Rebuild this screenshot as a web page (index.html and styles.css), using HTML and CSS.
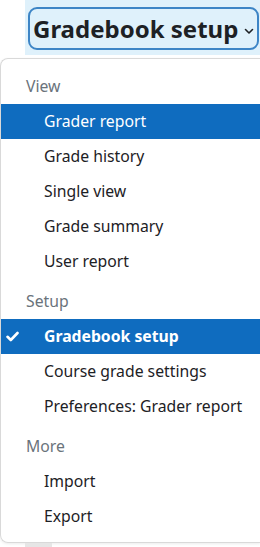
FILE: index.html
```html
<!DOCTYPE html>
<html lang="en">
<head>
    <meta charset="UTF-8">
    <meta name="viewport" content="width=device-width, initial-scale=1.0">
    <title>Gradebook setup</title>
    <link rel="stylesheet" href="styles.css">
</head>
<body>

    <!-- Selector -->
    <div class="select-wrap">
        <button class="select">
            <span>Gradebook setup</span>
            <svg class="chevron" width="10" height="7" viewBox="0 0 10 7"><path d="M1.5 1.5 L5 5 L8.5 1.5" fill="none" stroke="#1d2125" stroke-width="1.6" stroke-linecap="round" stroke-linejoin="round"/></svg>
        </button>
    </div>

    <!-- Dropdown menu -->
    <div class="menu">
        <div class="group">
            <div class="group-title">View</div>
            <a href="#" class="item active">Grader report</a>
            <a href="#" class="item">Grade history</a>
            <a href="#" class="item">Single view</a>
            <a href="#" class="item">Grade summary</a>
            <a href="#" class="item">User report</a>
        </div>
        <div class="group">
            <div class="group-title">Setup</div>
            <a href="#" class="item active selected">
                <svg class="check" width="13" height="11" viewBox="0 0 13 11"><path d="M1.5 5.8 L4.8 9 L11.5 2" fill="none" stroke="#fff" stroke-width="2.6" stroke-linecap="round" stroke-linejoin="round"/></svg>
                Gradebook setup
            </a>
            <a href="#" class="item">Course grade settings</a>
            <a href="#" class="item">Preferences: Grader report</a>
        </div>
        <div class="group">
            <div class="group-title">More</div>
            <a href="#" class="item">Import</a>
            <a href="#" class="item">Export</a>
        </div>
    </div>

    <div class="stub"></div>

</body>
</html>
```

FILE: styles.css
```css
/* Basic styles */
body {
    font-family: 'Noto Sans', 'Open Sans', sans-serif;
    background-color: #ffffff;
    color: #1d2125;
    margin: 0;
    padding: 0;
    width: 260px;
    overflow: hidden;
}

/* Selector styles */
.select-wrap {
    margin-left: 25px;
    background-color: #dff1fb;
    padding: 7px 1px 5px 3px;
}

.select {
    display: flex;
    align-items: center;
    justify-content: space-between;
    width: 100%;
    height: 43px;
    padding: 0 3px 0 3px;
    border: 2.5px solid #3d85c6;
    border-radius: 9px;
    background-color: #dff1fb;
    font-family: inherit;
    font-size: 24px;
    font-weight: 700;
    color: #1d2125;
    box-sizing: border-box;
}

.chevron {
    margin-top: 5px;
}

/* Menu styles */
.menu {
    margin-top: 3px;
    border: 1px solid #d9d9d9;
    border-right: none;
    border-radius: 8px 0 0 8px;
    padding: 10px 0 8px;
    box-shadow: 0 1px 3px rgba(0, 0, 0, 0.08);
}

.group + .group {
    margin-top: 5px;
}

.group-title {
    height: 35px;
    line-height: 35px;
    padding-left: 25px;
    font-size: 15.75px;
    color: #6a737b;
}

.item {
    position: relative;
    display: block;
    height: 35px;
    line-height: 35px;
    padding-left: 43px;
    font-size: 15.75px;
    color: #1d2125;
    text-decoration: none;
    white-space: nowrap;
}

.item.active {
    background-color: #0f6cbf;
    color: #ffffff;
}

.item.selected {
    font-weight: 700;
}

.check {
    position: absolute;
    left: 5px;
    top: 12px;
}

.stub {
    margin-left: 25px;
    width: 27px;
    height: 6px;
    background-color: #e6e6e6;
}
```
